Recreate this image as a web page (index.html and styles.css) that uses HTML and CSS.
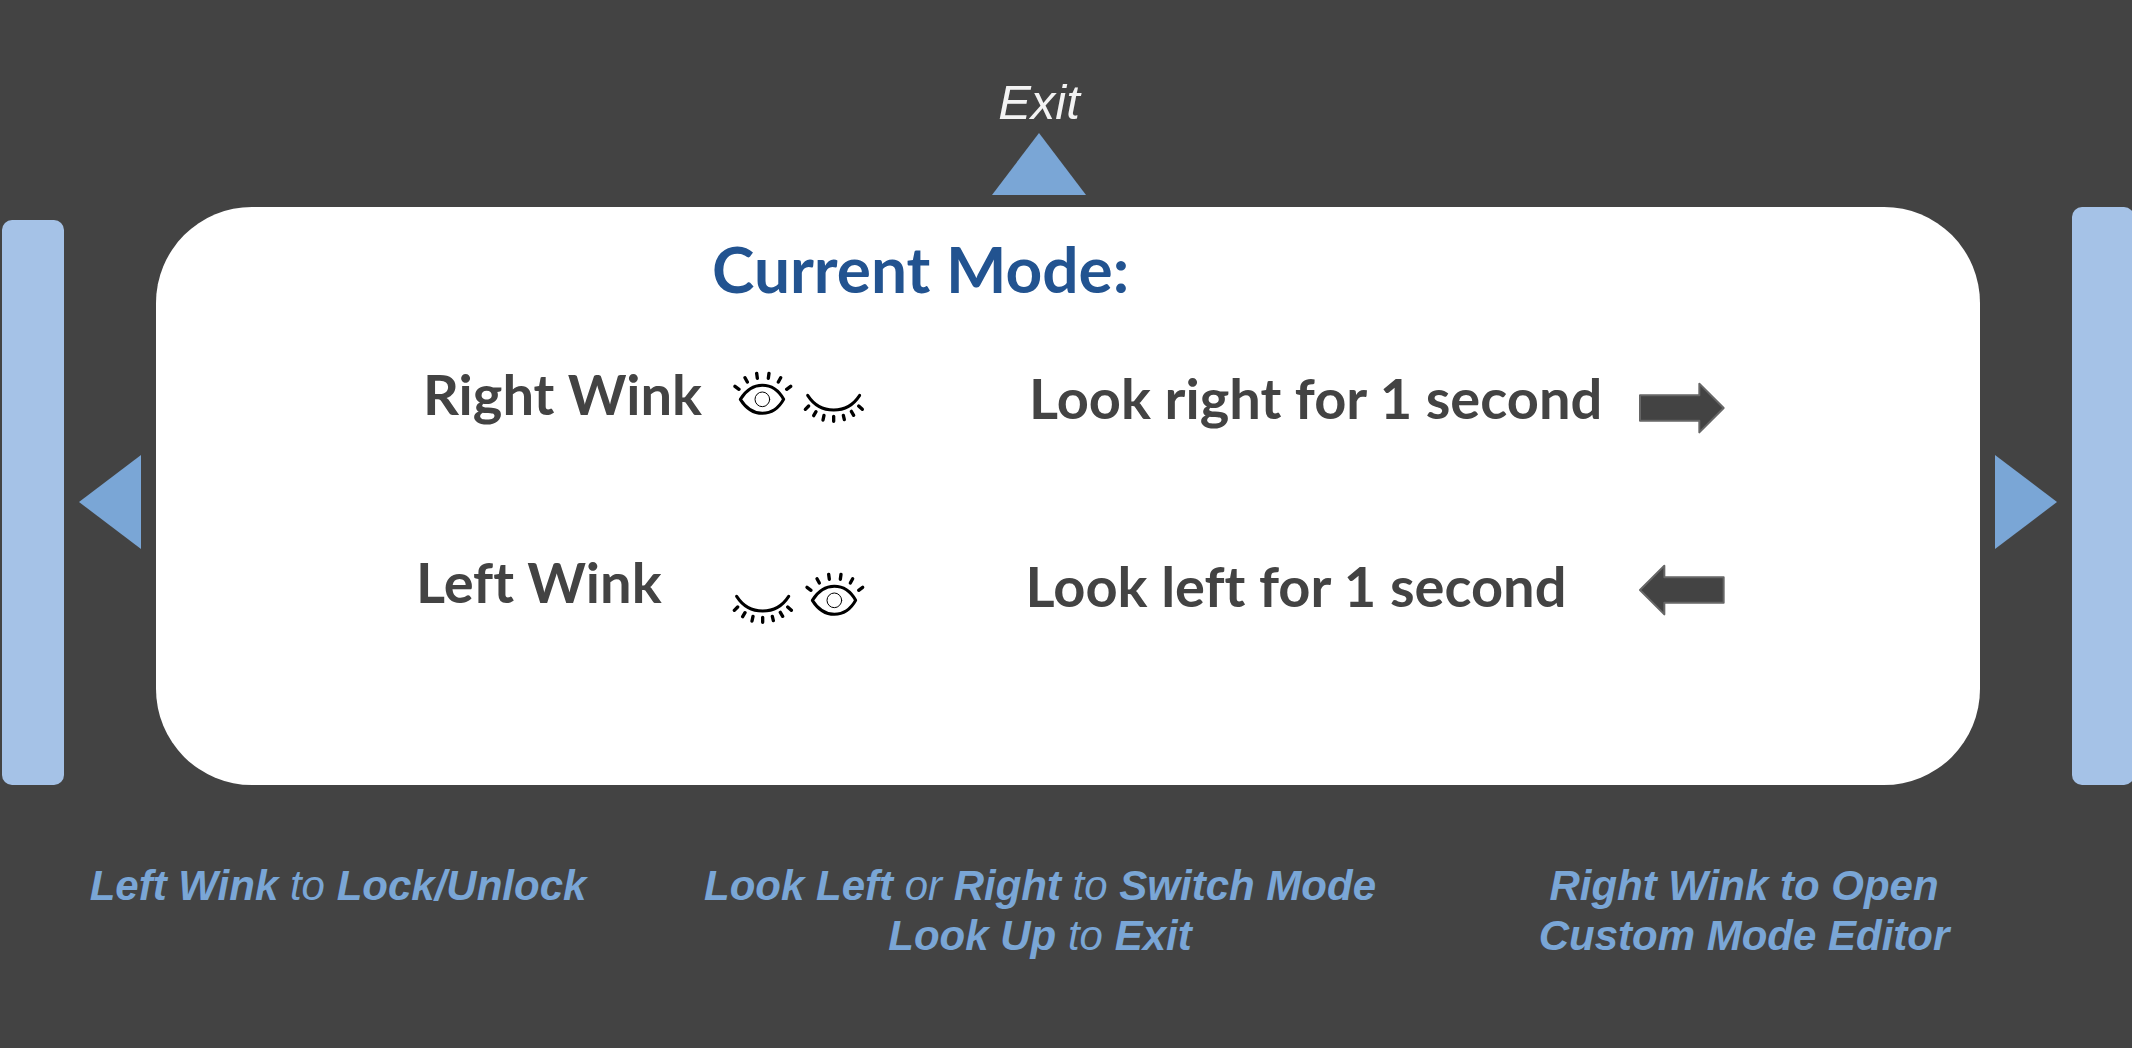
FILE: index.html
```html
<!DOCTYPE html>
<html lang="en">
<head>
<meta charset="utf-8">
<meta name="viewport" content="width=device-width, initial-scale=1">
<title>Current Mode</title>
<link rel="stylesheet" href="styles.css">
</head>
<body>
<svg class="defs" aria-hidden="true">
  <defs>
    <g id="eye-open" fill="none" stroke="#000" stroke-linecap="round" stroke-linejoin="round">
      <path stroke-width="9" d="M61 118C78 91 101 76 127 76C153 76 176 91 191 118C176 145 153 160 127 160C101 160 78 145 61 118Z"/>
      <circle stroke-width="3" cx="127" cy="118" r="22"/>
      <path stroke-width="10" d="M45 79L57 88M75 53L82 66M110 40L112 55M147 40L145 55M182 53L175 66M212 79L200 88"/>
    </g>
    <g id="eye-closed" fill="none" stroke="#000" stroke-linecap="round">
      <path stroke-width="9" d="M263 106C281 134 309 150 341 150C373 150 401 134 419 106"/>
      <path stroke-width="10" d="M266 138L256 148M288 155L281 167M312 166L309 180M341 169L341 184M370 166L373 179M394 154L401 166M416 138L427 148"/>
    </g>
  </defs>
</svg>
<main class="page">
  <header class="exit">
    <button class="exit-button" type="button">
      <span>Exit</span>
      <svg width="94" height="62" viewBox="0 0 94 62" aria-hidden="true"><path class="pointer" d="M47 0L94 62H0Z"/></svg>
    </button>
  </header>

  <section class="carousel">
    <div class="neighbour neighbour-previous"></div>
    <button class="switch" type="button" aria-label="Previous mode">
      <svg width="62" height="94" viewBox="0 0 62 94" aria-hidden="true"><path class="pointer" d="M0 47L62 0V94Z"/></svg>
    </button>
    <article class="card">
      <h1 class="title">Current Mode:</h1>
      <div class="action action-right">
        <span class="label">Right Wink</span>
        <svg class="wink" width="134" height="54" viewBox="36 30 402 162" role="img" aria-label="Left eye open, right eye closed">
          <use href="#eye-open"/><use href="#eye-closed"/>
        </svg>
        <span class="label gesture">Look right for 1 second</span>
        <svg class="arrow" width="88" height="52" viewBox="114 65 264 156" aria-hidden="true"><path d="M120 105H298V70L371 143L298 216V181H120Z"/></svg>
      </div>
      <div class="action action-left">
        <span class="label">Left Wink</span>
        <svg class="wink" width="134" height="54" viewBox="36 33 402 162" role="img" aria-label="Left eye closed, right eye open">
          <use href="#eye-closed" x="-213" y="3"/><use href="#eye-open" x="216" y="3"/>
        </svg>
        <span class="label gesture">Look left for 1 second</span>
        <svg class="arrow" width="88" height="52" viewBox="114 65 264 156" aria-hidden="true"><path d="M371 105H193V70L120 143L193 216V181H371Z"/></svg>
      </div>
    </article>
    <button class="switch" type="button" aria-label="Next mode">
      <svg width="62" height="94" viewBox="0 0 62 94" aria-hidden="true"><path class="pointer" d="M62 47L0 0V94Z"/></svg>
    </button>
    <div class="neighbour"></div>
  </section>

  <footer class="hints">
    <p><b>Left Wink</b> to <b>Lock/Unlock</b></p>
    <p><b>Look Left</b> or <b>Right</b> to <b>Switch Mode</b><br><b>Look Up</b> to <b>Exit</b></p>
    <p><b>Right Wink to Open<br>Custom Mode Editor</b></p>
  </footer>
</main>
</body>
</html>
```
FILE: styles.css
```css
* {
  box-sizing: border-box;
}

body {
  margin: 0;
  background: #434343;
  font-family: "Liberation Sans", Arial, sans-serif;
}

button {
  padding: 0;
  border: 0;
  background: none;
  color: inherit;
  font: inherit;
  cursor: pointer;
}

svg {
  display: block;
}

.defs {
  position: absolute;
  width: 0;
  height: 0;
}

.page {
  min-height: 100vh;
  padding-top: 74px;
  overflow-x: hidden;
}

.pointer {
  fill: #7aa6d6;
}

/* Exit control above the card */
.exit {
  display: flex;
  justify-content: center;
  padding-right: 54px;
  margin-bottom: 12px;
}

.exit-button {
  display: flex;
  flex-direction: column;
  align-items: center;
  gap: 3px;
  color: #f3f3f3;
  font-size: 49px;
  font-style: italic;
  line-height: 56px;
}

/* Card with its neighbours on both sides */
.carousel {
  display: flex;
  align-items: stretch;
  gap: 15px;
  margin: 0 -2px 0 2px;
}

.neighbour {
  flex: 0 0 62px;
  border-radius: 10px;
  background: #a5c2e7;
}

.neighbour-previous {
  margin-top: 13px;
}

.switch {
  flex: none;
  align-self: center;
  padding-top: 12px;
}

.card {
  flex: 1;
  padding: 24px 0 160px;
  border-radius: 96px;
  background: #fff;
  color: #434343;
  font-family: Lato, sans-serif;
  font-weight: 700;
  font-variant-ligatures: none;
}

.title {
  margin: 0 0 53px;
  padding-left: 556px;
  color: #225390;
  font-size: 64px;
  line-height: 76px;
}

.action {
  display: grid;
  align-items: start;
  font-size: 56px;
  line-height: 68px;
  white-space: nowrap;
}

.action-right {
  grid-template-columns: 309fr 297fr 609fr 342fr;
  margin-bottom: 114px;
  padding-left: 267px;
}

.action-left {
  grid-template-columns: 316fr 294fr 613fr 342fr;
  padding-left: 260px;
}

.gesture {
  padding-top: 4px;
}

.action-right .wink {
  margin-top: 10px;
}

.action-left .wink {
  margin-top: 23px;
}

.arrow {
  fill: #434343;
  stroke: #666;
  stroke-width: 6;
  stroke-linejoin: round;
}

.action-right .arrow {
  margin-top: 22px;
}

.action-left .arrow {
  margin-top: 16px;
}

/* Reminders of the available gestures */
.hints {
  display: grid;
  grid-template-columns: 676fr 728fr 680fr;
  padding: 76px 48px 48px 0;
  color: #7aa6d6;
  font-size: 42px;
  font-style: italic;
  line-height: 50px;
  text-align: center;
}

.hints p {
  margin: 0;
}
```
